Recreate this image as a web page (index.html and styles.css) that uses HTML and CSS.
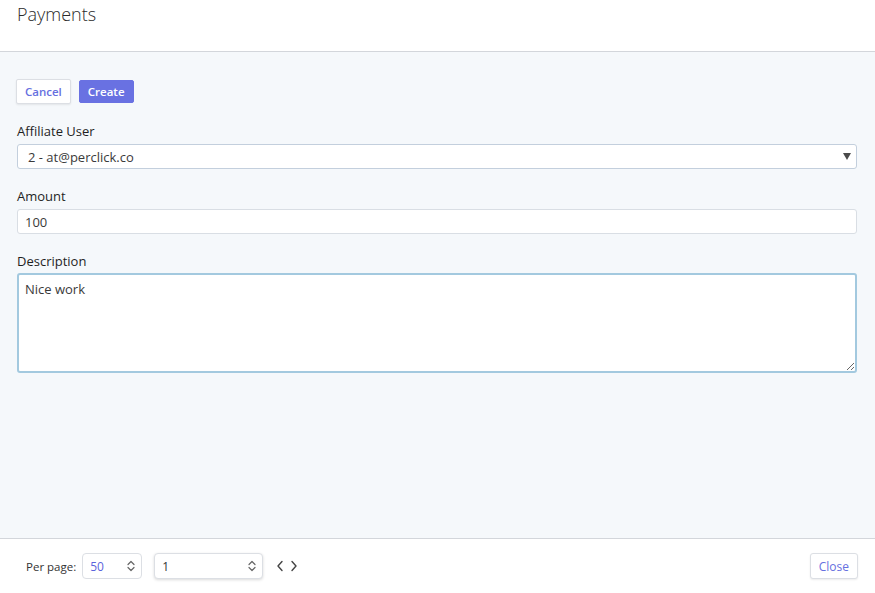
FILE: index.html
```html
<!DOCTYPE html>
<html lang="en">
<head>
<meta charset="utf-8">
<title>Payments</title>
<link rel="stylesheet" href="styles.css">
</head>
<body>
<div class="modal">
  <header class="modal-header">
    <h1 class="title">Payments</h1>
  </header>
  <main class="modal-body">
    <div class="actions">
      <button class="btn btn-light">Cancel</button>
      <button class="btn btn-primary">Create</button>
    </div>
    <div class="field">
      <label class="label">Affiliate User</label>
      <div class="select">
        <span class="select-value">2 - at@perclick.co</span>
        <svg class="select-arrow" width="8" height="7" viewBox="0 0 8 7"><path d="M0 0H8L4 7Z" fill="#4a4a4a"/></svg>
      </div>
    </div>
    <div class="field">
      <label class="label">Amount</label>
      <input class="input" type="text" value="100">
    </div>
    <div class="field field-desc">
      <label class="label">Description</label>
      <textarea class="textarea">Nice work</textarea>
    </div>
  </main>
  <footer class="modal-footer">
    <div class="pager">
      <span class="pager-label">Per page:</span>
      <div class="mini-select mini-select-sm">
        <span class="mini-value accent">50</span>
        <svg class="updown" width="8" height="12" viewBox="0 0 8 12"><path d="M1 4.5L4 1.5L7 4.5M1 7.5L4 10.5L7 7.5" fill="none" stroke="#666" stroke-width="1.2" stroke-linecap="round" stroke-linejoin="round"/></svg>
      </div>
      <div class="mini-select mini-select-lg">
        <span class="mini-value">1</span>
        <svg class="updown" width="8" height="12" viewBox="0 0 8 12"><path d="M1 4.5L4 1.5L7 4.5M1 7.5L4 10.5L7 7.5" fill="none" stroke="#666" stroke-width="1.2" stroke-linecap="round" stroke-linejoin="round"/></svg>
      </div>
      <div class="arrows">
        <svg width="8" height="12" viewBox="0 0 8 12"><path d="M6 1.5L2 6L6 10.5" fill="none" stroke="#444" stroke-width="1.4" stroke-linecap="round" stroke-linejoin="round"/></svg>
        <svg width="8" height="12" viewBox="0 0 8 12"><path d="M2 1.5L6 6L2 10.5" fill="none" stroke="#444" stroke-width="1.4" stroke-linecap="round" stroke-linejoin="round"/></svg>
      </div>
    </div>
    <button class="btn btn-light btn-close">Close</button>
  </footer>
</div>
</body>
</html>
```
FILE: styles.css
```css
html, body {
  margin: 0;
  padding: 0;
}
body {
  font-family: "Open Sans", "Noto Sans", sans-serif;
  color: #212529;
  background: #ffffff;
}
.modal {
  width: 875px;
  height: 593px;
  display: flex;
  flex-direction: column;
}
.modal-header {
  height: 52px;
  border-bottom: 1px solid #d3d6db;
  padding: 0 17px;
  box-sizing: border-box;
  flex: none;
}
.title {
  margin: 0;
  padding-top: 2px;
  font-size: 18px;
  font-weight: 300;
  color: #2b2b2b;
  line-height: 24px;
}
.modal-body {
  flex: 1;
  background: #f5f8fb;
  padding: 27px 18px 0 17px;
  box-sizing: border-box;
}
.actions {
  display: flex;
  gap: 8px;
  margin-left: -1px;
}
.btn {
  font-family: "Open Sans", sans-serif;
  font-size: 11.5px;
  font-weight: 600;
  height: 25px;
  padding: 0 8px;
  border-radius: 2px;
  cursor: pointer;
  box-sizing: border-box;
}
.btn-light {
  background: #ffffff;
  border: 1px solid #dcdfe4;
  color: #6670e0;
  box-shadow: 0 1px 2px rgba(0, 0, 0, 0.08);
}
.btn-primary {
  background: #6971e2;
  border: 1px solid #6971e2;
  color: #ffffff;
  margin-top: 1px;
  height: 23px;
}
.field {
  margin-top: 18px;
  display: flex;
  flex-direction: column;
}
.label {
  font-size: 13px;
  line-height: 18px;
  color: #1f1f1f;
  margin-bottom: 4px;
}
.field-desc .label {
  margin-bottom: 3px;
}
.select {
  height: 25px;
  background: #fff;
  border: 1px solid #c3cfdd;
  border-radius: 3px;
  box-sizing: border-box;
  display: flex;
  align-items: center;
  justify-content: space-between;
  padding: 0 5px 0 10px;
}
.select-value {
  font-size: 13px;
  color: #3a3a3a;
}
.input {
  height: 25px;
  background: #fff;
  border: 1px solid #d9dee4;
  border-radius: 3px;
  box-sizing: border-box;
  padding: 0 7px;
  font-family: "Open Sans", sans-serif;
  font-size: 13px;
  color: #3a3a3a;
  outline: none;
}
.textarea {
  height: 100px;
  background: #fff;
  border: 2px solid #a3c9df;
  border-radius: 3px;
  box-sizing: border-box;
  padding: 5px 6px;
  font-family: "Open Sans", sans-serif;
  font-size: 13px;
  color: #3a3a3a;
  outline: none;
  resize: vertical;
}
.modal-footer {
  flex: none;
  height: 55px;
  border-top: 1px solid #d3d6db;
  box-sizing: border-box;
  display: flex;
  align-items: center;
  justify-content: space-between;
  padding: 0 17px 0 26px;
}
.pager {
  display: flex;
  align-items: center;
}
.pager-label {
  font-size: 11.5px;
  color: #333;
  margin-right: 6px;
}
.mini-select {
  height: 26px;
  border: 1px solid #dcdfe4;
  border-radius: 4px;
  box-sizing: border-box;
  display: flex;
  align-items: center;
  justify-content: space-between;
  padding: 0 6px 0 7px;
  background: #fff;
}
.mini-select-sm {
  width: 60px;
}
.mini-select-lg {
  width: 109px;
  margin-left: 12px;
  box-shadow: 0 1px 3px rgba(0, 0, 0, 0.15);
}
.mini-value {
  font-size: 12px;
  color: #333;
}
.mini-value.accent {
  color: #5b63dc;
}
.arrows {
  display: flex;
  gap: 6px;
  margin-left: 13px;
}
.btn-close {
  height: 26px;
  font-weight: 400;
  font-size: 12px;
  padding: 0 8px;
  border-radius: 3px;
}
```
